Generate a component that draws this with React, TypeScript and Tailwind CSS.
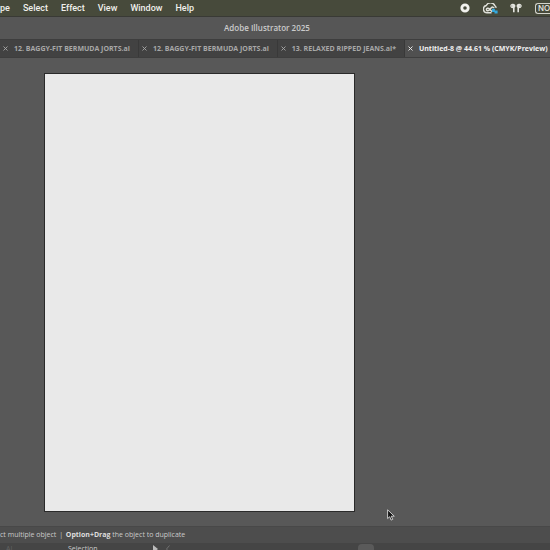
import { useState } from "react";

const MENUS = ["pe", "Select", "Effect", "View", "Window", "Help"];

const TABS = [
  { id: "a", title: "12. BAGGY-FIT BERMUDA JORTS.ai" },
  { id: "b", title: "12. BAGGY-FIT BERMUDA JORTS.ai" },
  { id: "c", title: "13. RELAXED RIPPED JEANS.ai*" },
  { id: "d", title: "Untitled-8 @ 44.61 % (CMYK/Preview)" },
];

function RecordIcon() {
  return (
    <svg viewBox="0 0 10 10" className="h-[10px] w-[10px]">
      <circle cx="5" cy="5" r="3.2" fill="none" stroke="#f2f2ee" strokeWidth="2.8" />
    </svg>
  );
}

function CloudIcon() {
  return (
    <svg viewBox="0 0 15 11" className="h-[11px] w-[15px]" fill="none">
      <path
        d="M8.500 9.800H4.300A3.700 3.700 0 0 1 3.300 2.500 4.700 4.700 0 0 1 11.900 2.800c.7.500 1.100 1.200 1.300 2"
        stroke="#e0e1da"
        strokeWidth="1.4"
      />
      <path
        d="M9.200 8.800 6.200 5.700C5.200 4.700 3.400 5.200 3.400 6.500s1.600 1.700 2.500.8L8.300 4.700c.9-.9 2.300-.7 2.800.3"
        stroke="#e0e1da"
        strokeWidth="1.5"
      />
      <path d="M9 5.700h2.900v1.700h2.700v3.200h-3.100V8.900H9z" fill="#35a8dc" />
    </svg>
  );
}

function AirpodsIcon() {
  return (
    <svg viewBox="0 0 12 10" className="h-[10px] w-[12px]" fill="#e4e5df">
      <path d="M2.600.8C4.400.6 5.400 1.600 5.400 3c0 .8-.3 1.400-.8 1.800v4.400H3V5.100C1.600 5.300.3 4.400.3 3 .3 1.800 1.300.9 2.600.8Z" />
      <path d="M9.400.8C7.600.6 6.600 1.600 6.600 3c0 .8.300 1.400.8 1.800v4.400H9V5.100c1.400.2 2.700-.7 2.700-2.100 0-1.200-1-2.100-2.300-2.200Z" />
      <path d="M1.800 2.400v1.200M10.200 2.400v1.200" stroke="#74776b" strokeWidth=".7" />
    </svg>
  );
}

function MenuBar() {
  return (
    <header className="flex h-4 shrink-0 items-center justify-between overflow-hidden bg-[#474a3b]">
      <nav className="flex gap-[13px] font-['Roboto',sans-serif] text-[9px] font-medium text-[#f0f0ec]">
        {MENUS.map((menu) => (
          <button key={menu} type="button" className="leading-4">
            {menu}
          </button>
        ))}
      </nav>
      <div className="flex items-center">
        <button type="button" aria-label="Recording" className="mr-[13px]">
          <RecordIcon />
        </button>
        <button type="button" aria-label="Creative Cloud" className="mr-3">
          <CloudIcon />
        </button>
        <button type="button" aria-label="AirPods" className="mr-[13px]">
          <AirpodsIcon />
        </button>
        <span className="w-[15px] rounded-l-[3px] border border-r-0 border-[#d2d3cb] pl-[2px] text-[8px] leading-[9px] font-medium text-[#ececE6]">
          NO
        </span>
      </div>
    </header>
  );
}

interface TabBarProps {
  active: string;
  onSelect: (id: string) => void;
}

function TabBar({ active, onSelect }: TabBarProps) {
  return (
    <div className="flex h-[19px] shrink-0 overflow-hidden border-y border-[#3e3e3e] bg-[#424242]">
      {TABS.map((tab) => (
        <div
          key={tab.id}
          className={`flex shrink-0 items-center gap-[6px] border-r pl-[3px] text-[7px] leading-4 font-bold whitespace-nowrap ${
            tab.id === active
              ? "grow border-transparent bg-[#505050] text-[#f0f0f0]"
              : "border-[#393939] pr-2 text-[#a8a8a8]"
          }`}
        >
          <button type="button" aria-label={`Close ${tab.title}`}>
            <svg viewBox="0 0 5 5" className="h-[5px] w-[5px]" stroke="currentColor" strokeWidth=".9">
              <path d="M.5.5l4 4M4.500.5l-4 4" />
            </svg>
          </button>
          <button type="button" onClick={() => onSelect(tab.id)}>
            {tab.title}
          </button>
        </div>
      ))}
    </div>
  );
}

export default function App() {
  const [active, setActive] = useState("d");

  return (
    <div className="relative flex h-screen flex-col overflow-hidden bg-[#585858] font-['Inter',sans-serif]">
      <MenuBar />

      <div className="flex h-[23px] shrink-0 items-center justify-center border-t border-[#393a35] bg-[#565656] pr-4 font-['Open_Sans',sans-serif]">
        <h1 className="text-[8px] font-semibold text-[#cbcbcb]">Adobe Illustrator 2025</h1>
      </div>

      <div className="font-['Open_Sans',sans-serif]">
        <TabBar active={active} onSelect={setActive} />
      </div>

      <main className="flex min-h-0 grow pt-[15px] pb-[14px] pl-11">
        <div className="aspect-[311/439] border border-[#2a2a2a] bg-[#e9e9e9]" />
      </main>

      <footer className="shrink-0 font-['Open_Sans',sans-serif] text-[7px] font-medium text-[#cacaca]">
        <div className="flex h-[17px] items-center border-t border-[#484848] bg-[#4d4d4d] whitespace-nowrap">
          <p>
            ct multiple object <span className="px-[1px]">|</span>{" "}
            <b className="text-[#dedede]">Option+Drag</b> the object to duplicate
          </p>
        </div>
        <div className="flex h-[7px] items-start overflow-hidden bg-[#454545] leading-[11px]">
          <span className="w-[68px] pl-[6px] text-[#626262]">AI</span>
          <span className="w-[85px]">Selection</span>
          <svg viewBox="0 0 5 8" className="mt-[2px] h-2 w-[5px]" fill="#bcbcbc">
            <path d="M0 0l5 4-5 4z" />
          </svg>
          <svg viewBox="0 0 4 8" className="mt-[2px] ml-2 h-2 w-1" fill="none" stroke="#707070">
            <path d="M3.500.5L.5 4l3 3.500" />
          </svg>
          <span className="mt-[1px] ml-[188px] h-[10px] w-4 rounded-[4px] bg-[#5a5a5a]" />
        </div>
      </footer>

      <svg
        viewBox="0 0 8 12"
        className="pointer-events-none absolute top-[509px] left-[387px] h-3 w-2"
        fill="#151515"
        stroke="#d8d8d8"
        strokeWidth=".9"
      >
        <path d="M.6.8v8.800l2.100-1.900 1.400 3.400 1.600-.7-1.400-3.200h3z" />
      </svg>
    </div>
  );
}
